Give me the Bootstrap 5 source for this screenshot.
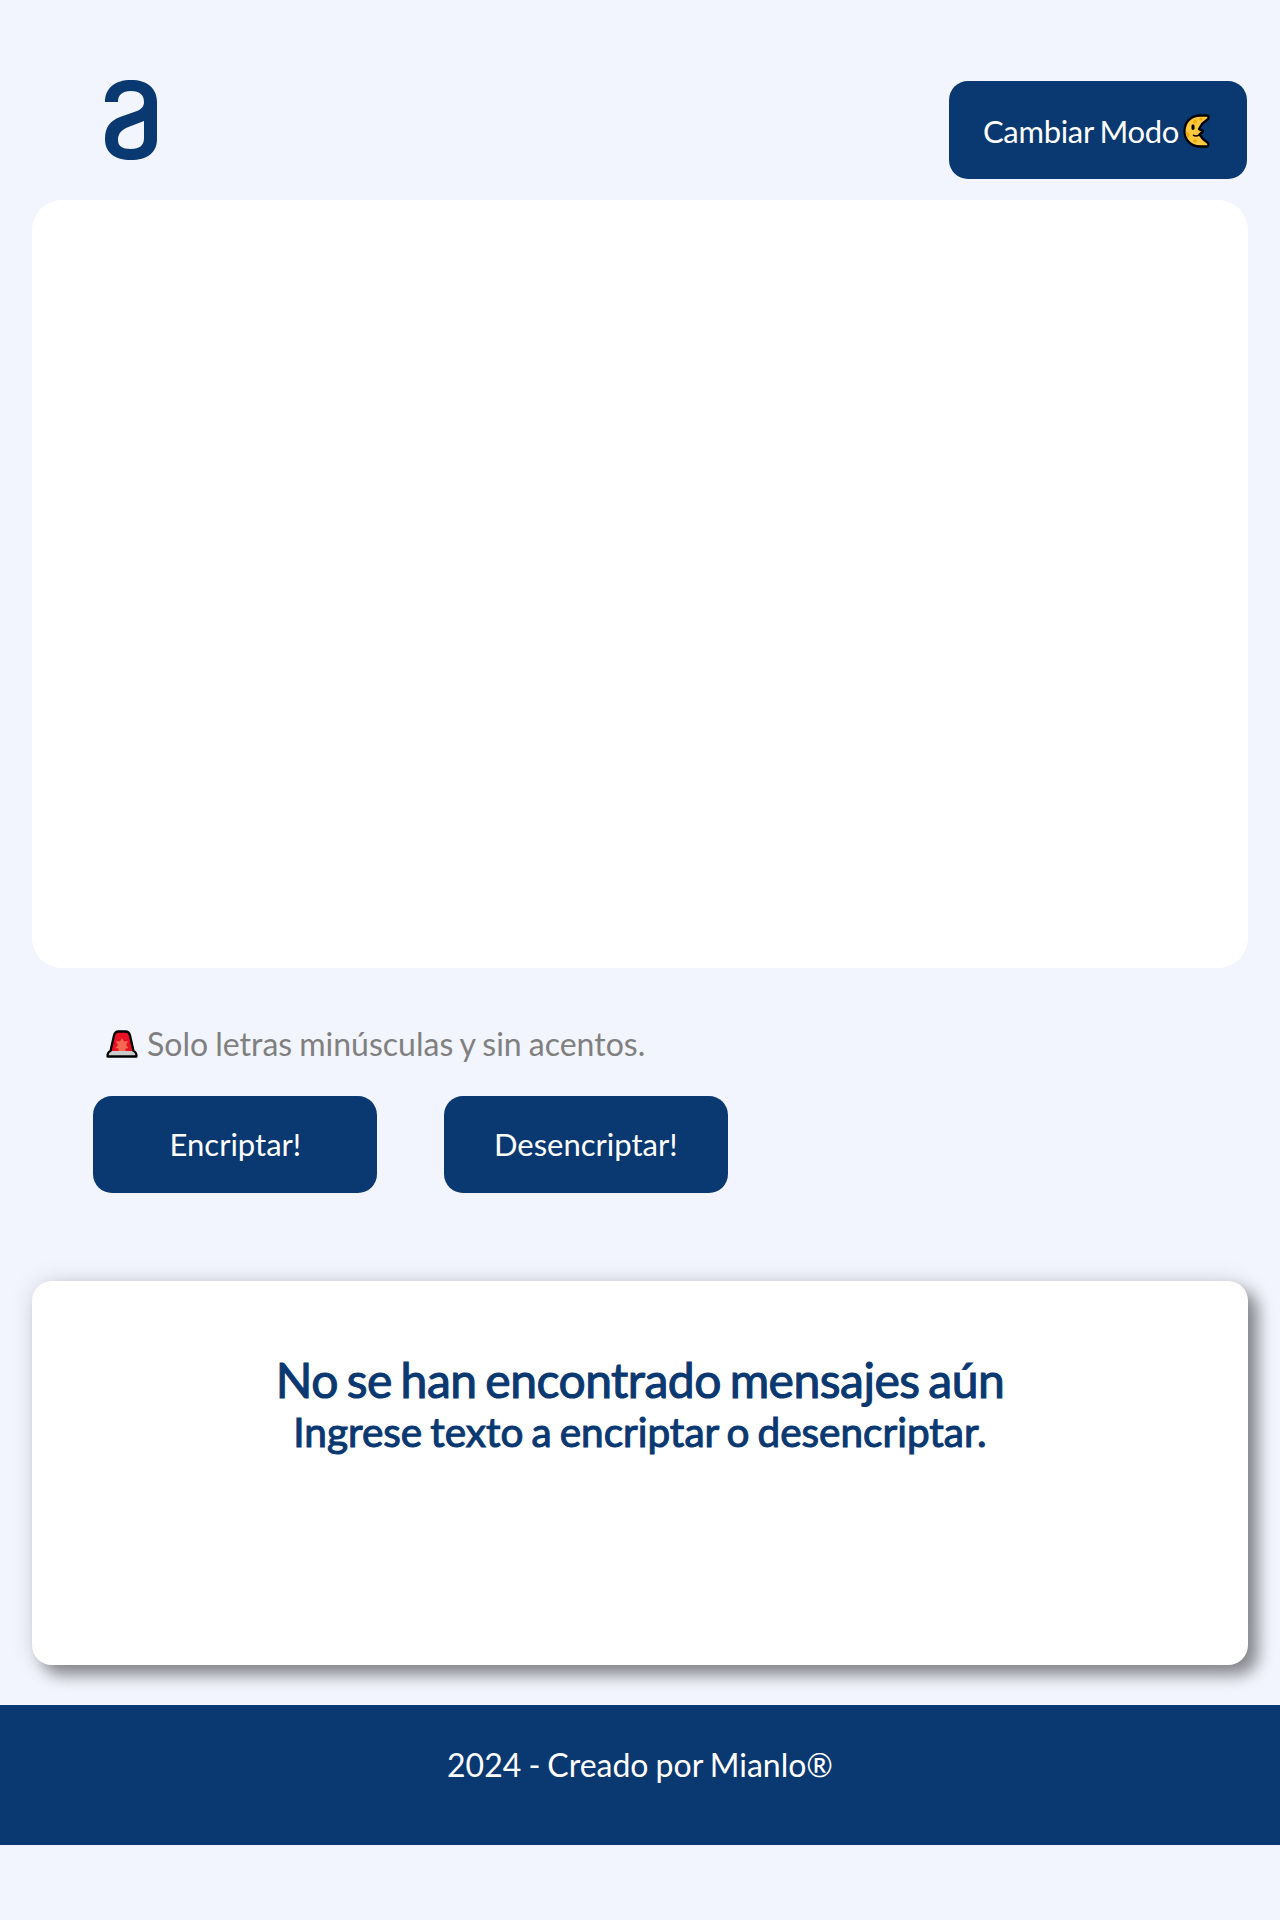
<!DOCTYPE html>
<html lang="es">
<head>
<meta charset="utf-8">
<meta name="viewport" content="width=device-width, initial-scale=1">
<title>Encriptador de texto</title>
<link href="https://cdn.jsdelivr.net/npm/bootstrap@5.3.0/dist/css/bootstrap.min.css" rel="stylesheet">
<style>
  :root { --navy: #0a3871; }
  body { background: #f2f5fd; font-family: Lato, sans-serif; line-height: 1.2; font-size: 32px; word-spacing: -1.1px; }
  .topbar { padding: 80px 33.3px 0 105px; height: 200px; }
  .logo { width: 53px; height: 81px; }
  .btn-navy { --bs-btn-color: #fff; --bs-btn-bg: var(--navy); --bs-btn-hover-color: #fff; --bs-btn-hover-bg: #072b61;
    --bs-btn-active-color: #fff; --bs-btn-active-bg: #072b61;
    --bs-btn-border-width: 0; --bs-btn-border-radius: 19px; --bs-btn-padding-x: 0; --bs-btn-padding-y: 0; --bs-btn-line-height: 1.2;
    --bs-btn-font-size: 31px; width: 284px; height: 97.3px; }
  .btn-mode { width: 297.4px; margin-top: 1.3px; padding: 3px 3px 0 0; word-spacing: -1.5px; letter-spacing: -.3px; }
  .moon { width: 27px; height: 34px; margin-left: 4px; }
  .entry { height: 768px; border: 0; border-radius: 30px; resize: none; }
  .hint { color: #808080; margin: 56.5px 0 0 74px; height: 39px; }
  .siren { width: 32px; height: 28px; margin-right: 9px; }
  .actions { margin: 32px 0 0 61.4px; gap: 66.4px; }
  .result { height: 384px; margin-top: 88.4px; padding-top: 69.5px; border: 0; border-radius: 20px; color: var(--navy);
    box-shadow: 10px 10px 16px rgba(0,0,0,.42), 0 0 24px rgba(0,0,0,.12); }
  .result h1, .result h2 { font-weight: 400; -webkit-text-stroke: 1.1px var(--navy); }
  .result h1 { font-size: 48px; letter-spacing: -.5px; word-spacing: -3px; }
  .result h2 { font-size: 40.5px; word-spacing: -2.3px; }
  .foot { background: var(--navy); height: 140px; margin-top: 40px; padding-top: 41px; }
</style>
</head>
<body>
<header class="topbar d-flex justify-content-between align-items-start">
  <svg class="logo" viewBox="0 0 53 81" aria-label="Logo"><path fill="#0a3871" fill-rule="evenodd" d="M0 22C0 8 10 0 26 0s26 8 26 22v37c0 14-10 21-26 21S0 73 0 59c0-12 5-18 15-22l17-6c5-2 7-5 7-9 0-7-4-11-13-11s-13 4-13 11ZM39 41 26 46c-9 3-13 7-13 14 0 6 4 9 13 9s13-4 13-11Z"/></svg>
  <button class="btn btn-navy btn-mode d-flex align-items-center justify-content-center" type="button">Cambiar Modo<svg class="moon" viewBox="0 0 27 34"><path fill="#ffc83d" stroke="#000" stroke-width="2.3" stroke-linejoin="round" d="M24 1.500H17C8 1.500 1.500 8 1.500 17S8 32.500 17 32.500h6.500c2 0 2.500-3 1-4L20 25l-3.500-4.500 3-2.500c1-1 0-2-2-2l-1.500-1 3-5 5.500-4.500c1.500-1 1.500-4-.5-4Z"/><g fill="#f2a600"><circle cx="18" cy="5" r="1.600"/><circle cx="12" cy="7.500" r="1.700"/><circle cx="12" cy="27" r="1.700"/><path d="M2.600 18a4 3 0 0 1 3 5l-1 1q-2-3-2-6"/></g><rect x="8.500" y="10.500" width="3" height="5.500" rx="1.400"/><path d="M10 21q3 2 6 0" fill="none" stroke="#000" stroke-width="1.600"/></svg></button>
</header>
<main class="px-4 mx-2">
  <textarea class="entry form-control shadow-none" aria-label="Texto"></textarea>
  <p class="hint d-flex align-items-center"><svg class="siren" viewBox="0 0 32 28"><path fill="#e81224" d="M4 21 8 5q1-3 4-3h8q3 0 4 3l4 16Z"/><path fill="#f4694f" d="m16 8 2 3.500 4-.5-2 4 2.500 3-3 .5V21h-7v-2.500l-3-.5 2.500-3-2-4 4 .5Z"/><path fill="#ccc" d="M4 21h24l1 5H3Z"/><path fill="none" stroke="#000" stroke-width="2.300" stroke-linejoin="round" d="M8 5.500Q9 1.500 12.500 1.500h7q3.500 0 4.500 4l3.500 15.500q3 1 3 5.500h-29q0-4.500 3-5.500Z"/></svg>Solo letras minúsculas y sin acentos.</p>
  <div class="actions d-flex">
    <button class="btn btn-navy" type="button">Encriptar!</button>
    <button class="btn btn-navy" type="button">Desencriptar!</button>
  </div>
  <section class="result card text-center">
    <h1 class="mb-0">No se han encontrado mensajes aún</h1>
    <h2 class="mb-0">Ingrese texto a encriptar o desencriptar.</h2>
  </section>
</main>
<footer class="foot text-white text-center">2024 - Creado por Mianlo®</footer>
<script src="https://cdn.jsdelivr.net/npm/bootstrap@5.3.0/dist/js/bootstrap.bundle.min.js"></script>
</body>
</html>
